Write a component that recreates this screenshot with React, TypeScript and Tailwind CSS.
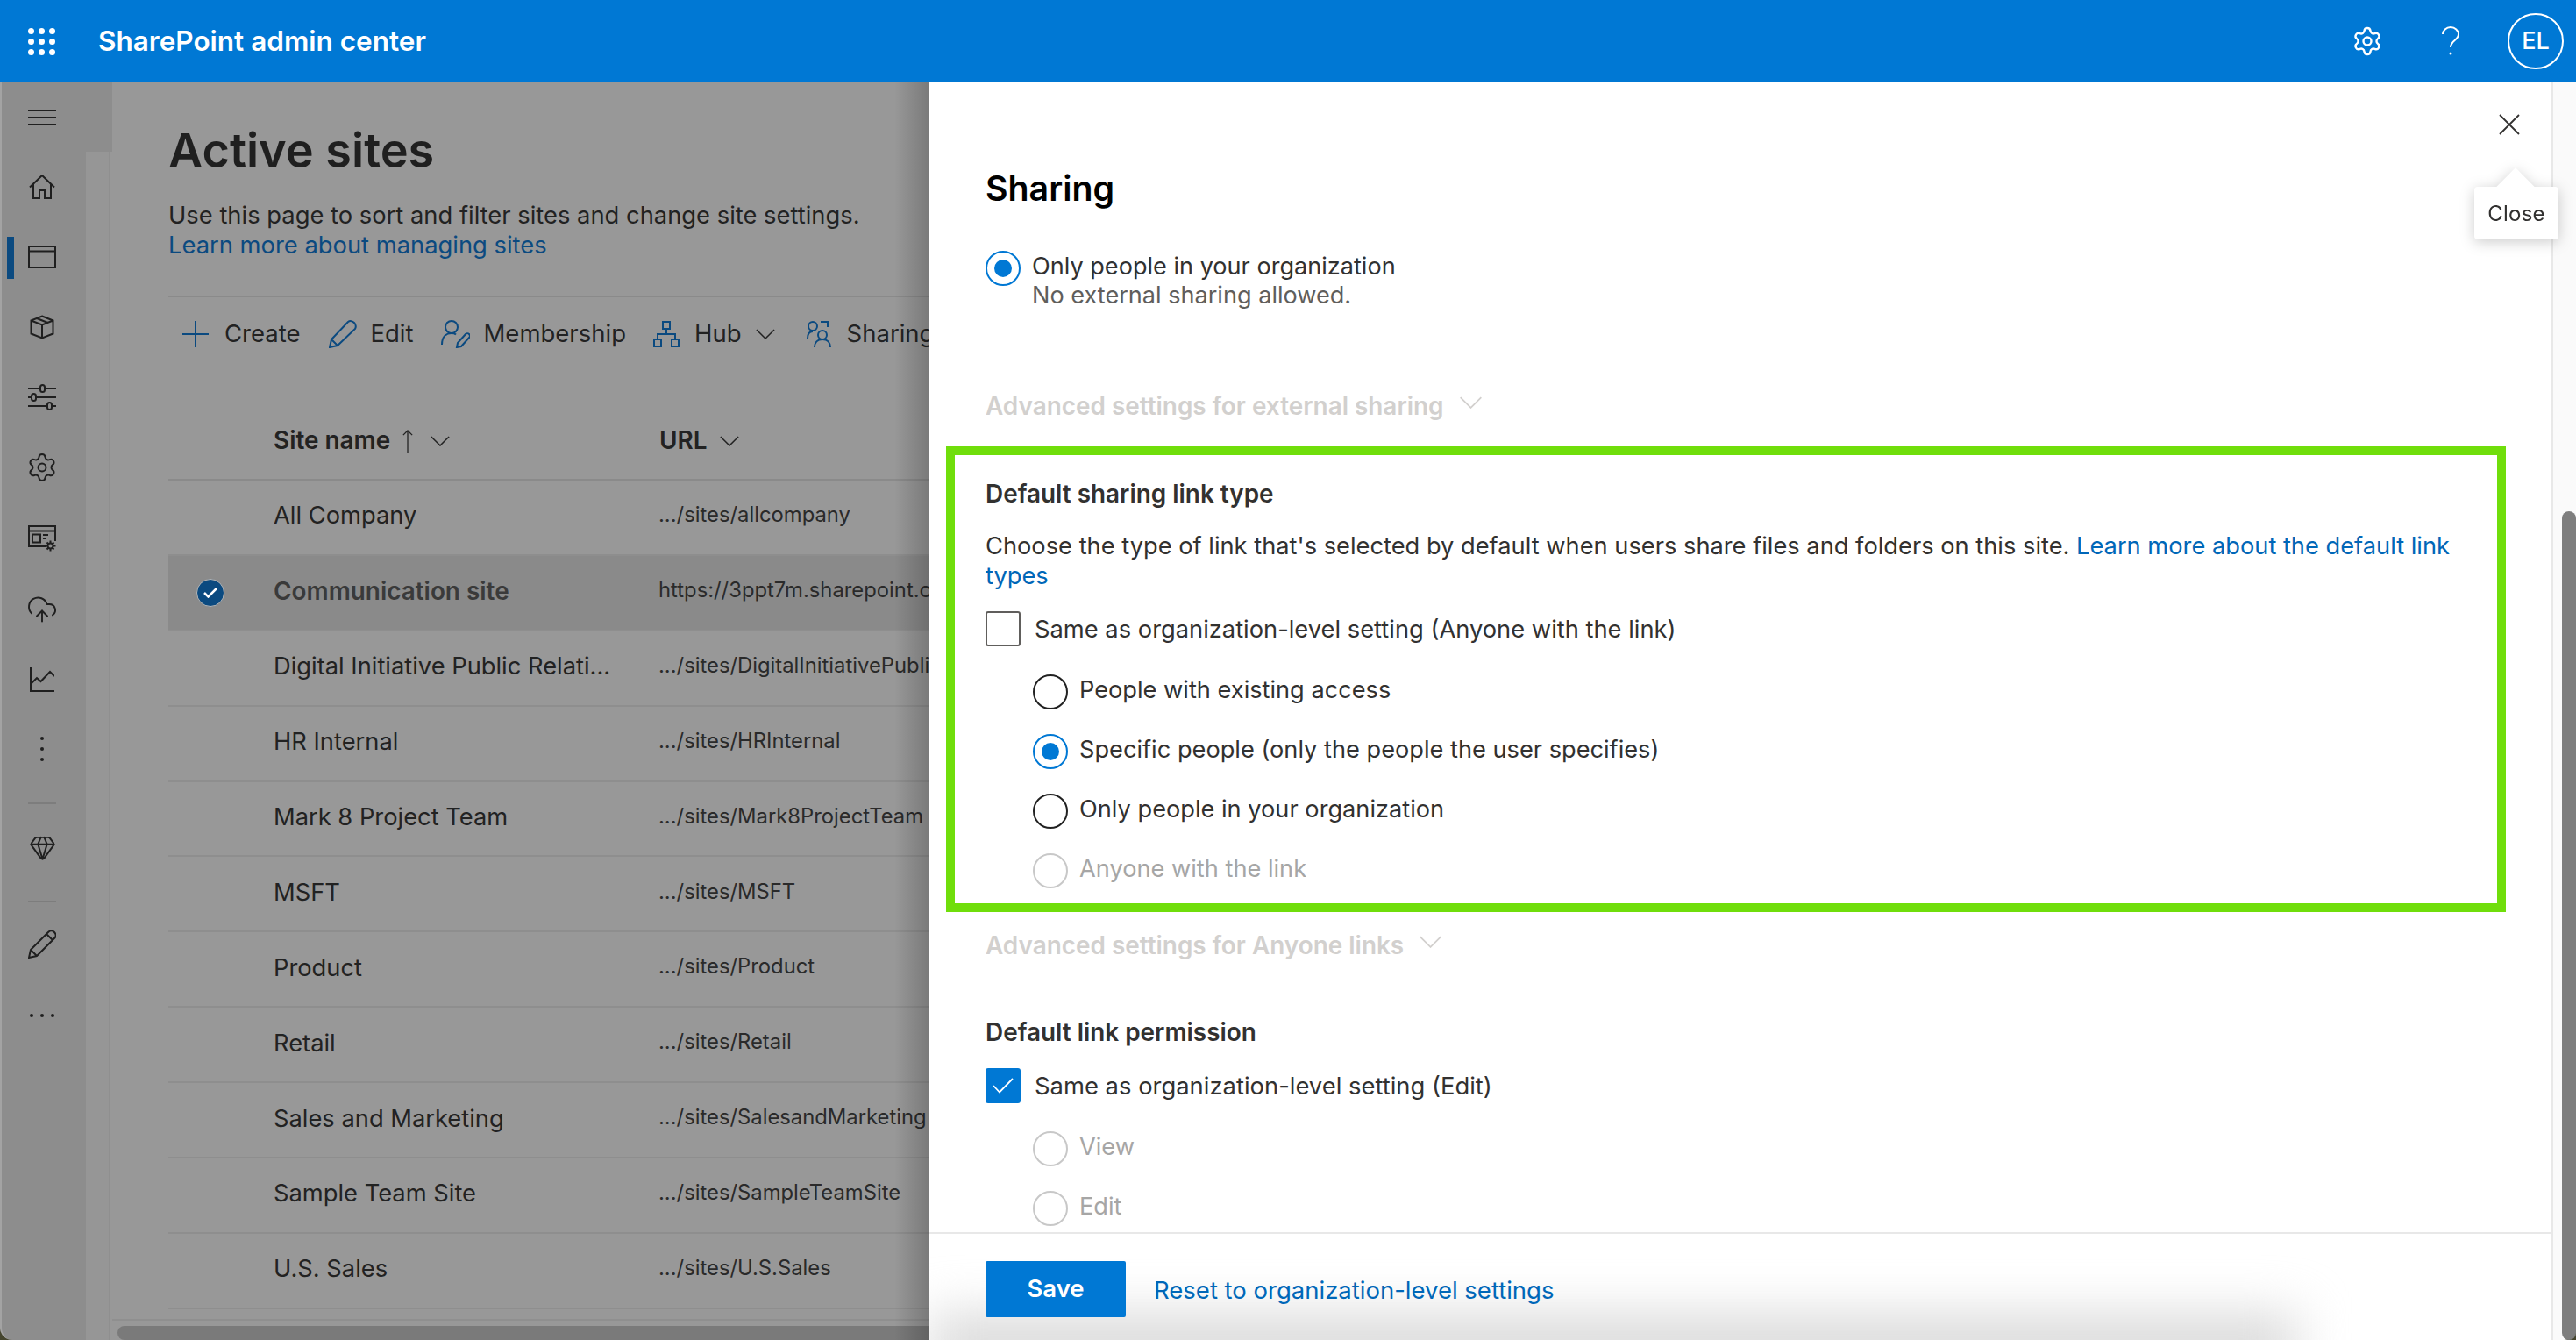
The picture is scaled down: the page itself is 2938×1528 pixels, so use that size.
import { Settings, CloudUpload, Gem } from "lucide-react";

const sites = [
  { name: "All Company", url: ".../sites/allcompany" },
  { name: "Communication site", url: "https://3ppt7m.sharepoint.com/sites/comm", selected: true },
  { name: "Digital Initiative Public Relati...", url: ".../sites/DigitalInitiativePublicRelations" },
  { name: "HR Internal", url: ".../sites/HRInternal" },
  { name: "Mark 8 Project Team", url: ".../sites/Mark8ProjectTeam" },
  { name: "MSFT", url: ".../sites/MSFT" },
  { name: "Product", url: ".../sites/Product" },
  { name: "Retail", url: ".../sites/Retail" },
  { name: "Sales and Marketing", url: ".../sites/SalesandMarketing" },
  { name: "Sample Team Site", url: ".../sites/SampleTeamSite" },
  { name: "U.S. Sales", url: ".../sites/U.S.Sales" },
];

function Chevron({ className }: { className: string }) {
  return (
    <svg viewBox="0 0 24 13" className={`shrink-0 ${className}`} fill="none" stroke="currentColor" strokeWidth="1.6">
      <path d="M1 1l11 11L23 1" />
    </svg>
  );
}

function Radio({ checked, disabled }: { checked?: boolean; disabled?: boolean }) {
  const border = checked ? "border-[#0078d4]" : disabled ? "border-[#c8c8c8]" : "border-[#222222]";
  return (
    <span className={`flex h-10 w-10 shrink-0 items-center justify-center rounded-full border-2 bg-white ${border}`}>
      {checked && <span className="h-5 w-5 rounded-full bg-[#0078d4]" />}
    </span>
  );
}

function RadioRow({ label, checked, disabled, className }: { label: string; checked?: boolean; disabled?: boolean; className: string }) {
  return (
    <div className={`ml-[54px] flex h-10 items-center gap-[13px] ${className}`}>
      <Radio checked={checked} disabled={disabled} />
      <span className={`-mt-[3px] text-[27.2px] ${disabled ? "text-[#a6a6a6]" : "text-[#323130]"}`}>{label}</span>
    </div>
  );
}

function NavSlot({ className, children }: { className: string; children: React.ReactNode }) {
  return <div className={`flex w-[92px] items-center justify-center ${className}`}>{children}</div>;
}

function SideNav() {
  return (
    <div className="flex w-[98px] shrink-0 flex-col rounded-bl-[14px] border-l-2 border-[#a3a3a3] bg-[#8d8d8d] text-[#1f1f1f]">
      <NavSlot className="h-[79px]">
        <div className="flex w-[32px] flex-col gap-[6px]">
          <span className="h-[2px] bg-[#1f1f1f]" />
          <span className="h-[2px] bg-[#1f1f1f]" />
          <span className="h-[2px] bg-[#1f1f1f]" />
        </div>
      </NavSlot>
      <NavSlot className="h-[80px]">
        <svg viewBox="0 0 30 28" className="h-[28px] w-[30px]" fill="none" stroke="currentColor" strokeWidth="2">
          <path d="M1 14.5L15 1l14 13.5M5 11v16h7v-9h6v9h7V11" />
        </svg>
      </NavSlot>
      <div className="relative">
        <span className="absolute left-[6px] top-[17px] h-[48px] w-2 bg-[#0b4a80]" />
        <NavSlot className="h-[80px]">
          <svg viewBox="0 0 32 26" className="h-[26px] w-[32px]" fill="none" stroke="currentColor" strokeWidth="2">
            <path d="M1 1h30v24H1zM1 6.5h30" />
          </svg>
        </NavSlot>
      </div>
      <NavSlot className="h-[80px]">
        <svg viewBox="0 0 28 28" className="h-[28px] w-[28px]" fill="none" stroke="currentColor" strokeWidth="2">
          <path d="M14 1.5l12.5 5v15L14 26.5l-12.5-5v-15zM1.5 6.5L14 11.5l12.5-5M14 11.5v15M8 4l12.5 5" />
        </svg>
      </NavSlot>
      <NavSlot className="h-[80px]">
        <svg viewBox="0 0 32 30" className="h-[30px] w-[32px]" fill="none" stroke="currentColor" strokeWidth="2">
          <path d="M0 5h13M20 5h12M0 15h3M10 15h22M0 25h21M28 25h4" />
          <rect x="14" y="1" width="5" height="8" rx="2.5" />
          <rect x="4" y="11" width="5" height="8" rx="2.5" />
          <rect x="22" y="21" width="5" height="8" rx="2.5" />
        </svg>
      </NavSlot>
      <NavSlot className="h-[80px]">
        <Settings className="h-[36px] w-[36px]" strokeWidth={1.3} />
      </NavSlot>
      <NavSlot className="h-[82px]">
        <svg viewBox="0 0 32 30" className="h-[30px] w-[32px]" fill="none" stroke="currentColor" strokeWidth="2">
          <path d="M20 24H1V1h30v17M1 6.5h30M5 10.500h9v9H5zM17 11h6M17 15h4" />
          <circle cx="25.500" cy="23.500" r="3" />
          <path d="M25.500 17.500v3M25.500 26.500v3M19.500 23.500h3M28.500 23.500h3M21.500 19.500l2 2M27.500 25.500l2 2M21.500 27.500l2-2M27.500 21.500l2-2" />
        </svg>
      </NavSlot>
      <NavSlot className="h-[80px]">
        <CloudUpload className="h-[36px] w-[36px]" strokeWidth={1.3} />
      </NavSlot>
      <NavSlot className="h-[79px]">
        <svg viewBox="0 0 28 28" className="h-[28px] w-[28px]" fill="none" stroke="currentColor" strokeWidth="2">
          <path d="M1 0v27h27M1 19l7-7 4.500 4L23 5l5 5" />
        </svg>
      </NavSlot>
      <NavSlot className="h-[80px]">
        <div className="flex flex-col gap-[8px]">
          <span className="h-1 w-1 rounded-full bg-[#1f1f1f]" />
          <span className="h-1 w-1 rounded-full bg-[#1f1f1f]" />
          <span className="h-1 w-1 rounded-full bg-[#1f1f1f]" />
        </div>
      </NavSlot>
      <div className="ml-[30px] mt-[21px] h-[2px] w-[32px] bg-[#7d7d7d]" />
      <NavSlot className="mt-[17px] h-[64px]">
        <Gem className="h-[31px] w-[31px]" strokeWidth={1.5} />
      </NavSlot>
      <div className="ml-[30px] mt-[29px] h-[2px] w-[32px] bg-[#7d7d7d]" />
      <NavSlot className="mt-[16px] h-[64px]">
        <svg viewBox="0 0 32 32" className="h-[32px] w-[32px]" fill="none" stroke="currentColor" strokeWidth="2">
          <path d="M1 31l2-9L23 2c2-2 5-2 7 0s2 5 0 7L10 29zM3 22l7 7M21 4l7 7" />
        </svg>
      </NavSlot>
      <NavSlot className="mt-[41px] h-[16px]">
        <div className="flex gap-[8px]">
          <span className="h-1 w-1 rounded-full bg-[#1f1f1f]" />
          <span className="h-1 w-1 rounded-full bg-[#1f1f1f]" />
          <span className="h-1 w-1 rounded-full bg-[#1f1f1f]" />
        </div>
      </NavSlot>
    </div>
  );
}

function Toolbar() {
  return (
    <div className="mt-[26px] flex h-[32px] items-center pl-4 text-[27.5px] text-[#222222]">
      <svg viewBox="0 0 30 30" className="h-[30px] w-[30px] shrink-0 text-[#0b4a80]" fill="none" stroke="currentColor" strokeWidth="2">
        <path d="M15 0v30M0 15h30" />
      </svg>
      <span className="ml-[18px]">Create</span>
      <svg viewBox="0 0 32 32" className="ml-[32px] h-[32px] w-[32px] shrink-0 text-[#0b4a80]" fill="none" stroke="currentColor" strokeWidth="2">
        <path d="M1 31l2-9L22 2c2-1.500 5-1 7 1s2 5 1 7L10 29zM3 22l7 7" />
      </svg>
      <span className="ml-[16px]">Edit</span>
      <svg viewBox="0 0 33 32" className="ml-[31px] h-[32px] w-[33px] shrink-0 text-[#0b4a80]" fill="none" stroke="currentColor" strokeWidth="2">
        <circle cx="12" cy="8" r="7" />
        <path d="M1 28c0-8 4-13 11-13 2 0 4 .5 5 1.500M18 31l1-5 9-10c1-1 3-1 4 0s1 3 0 4l-9 10z" />
      </svg>
      <span className="ml-[16px]">Membership</span>
      <svg viewBox="0 0 30 30" className="ml-[31px] h-[30px] w-[30px] shrink-0 text-[#0b4a80]" fill="none" stroke="currentColor" strokeWidth="2">
        <path d="M11 1h8v8h-8zM1 21h8v8H1zM21 21h8v8h-8zM15 9v6M5 21v-6h20v6" />
      </svg>
      <span className="ml-[17px]">Hub</span>
      <Chevron className="ml-[16px] h-[12px] w-[22px]" />
      <svg viewBox="0 0 28 30" className="ml-[36px] h-[30px] w-[28px] shrink-0 text-[#0b4a80]" fill="none" stroke="currentColor" strokeWidth="2">
        <circle cx="7" cy="6" r="5" />
        <circle cx="18" cy="16" r="5" />
        <path d="M1 20c0-5 2-8 6-8M9 30c0-5 3-9 9-9s9 4 9 9M16 1h8v6" />
      </svg>
      <span className="ml-[18px] whitespace-nowrap">Sharing</span>
    </div>
  );
}

function SitesPage() {
  return (
    <div className="relative flex min-w-0 flex-1 flex-col overflow-hidden bg-[#989898]">
      <div className="flex-1 pl-[64px]">
        <h1 className="mt-[46px] h-[64px] text-[54px] font-semibold leading-[64px] text-[#1f1f1f]">Active sites</h1>
        <p className="mt-[25px] whitespace-nowrap text-[27.35px] leading-[33.500px] text-[#222222]">
          Use this page to sort and filter sites and change site settings.
          <br />
          <a className="text-[#0b4a80]">Learn more about managing sites</a>
        </p>
        <div className="mt-[41px] h-[2px] bg-[#8a8a8a]" />
        <Toolbar />
        <div className="mt-[84px] flex h-[67px] items-center border-b-2 border-[#8a8a8a] pb-[22px] pl-[120px] text-[27.9px] font-semibold text-[#222222]">
          <span className="w-[147px] whitespace-nowrap">Site name</span>
          <svg viewBox="0 0 14 32" className="h-[30px] w-[12px] shrink-0" fill="none" stroke="currentColor" strokeWidth="1.500">
            <path d="M7 32V2M1 8l6-6 6 6" />
          </svg>
          <Chevron className="ml-[19px] h-[12px] w-[24px]" />
          <span className="ml-[238px]">URL</span>
          <Chevron className="ml-[13px] h-[12px] w-[24px]" />
        </div>
        {sites.map((s) => (
          <div
            key={s.name}
            className={`flex h-[85.9px] items-center border-b-2 border-[#8e8e8e] ${s.selected ? "bg-[#8a8a8a]" : ""}`}
          >
            <div className="w-[120px] shrink-0 pl-8">
              {s.selected && (
                <span className="flex h-8 w-8 items-center justify-center rounded-full border border-[#b5b5b5] bg-[#0b4a80]">
                  <svg viewBox="0 0 16 12" className="h-[12px] w-[16px]" fill="none" stroke="white" strokeWidth="2.500">
                    <path d="M1 6l4.500 4.500L15 1" />
                  </svg>
                </span>
              )}
            </div>
            <span className={`-mt-[2px] w-[439px] shrink-0 whitespace-nowrap ${s.selected ? "text-[27.9px] font-semibold text-[#3a3a3a]" : "text-[27.3px] text-[#222222]"}`}>
              {s.name}
            </span>
            <span className="-mt-[6px] whitespace-nowrap text-[23.8px] text-[#2a2a2a]">{s.url}</span>
          </div>
        ))}
      </div>
      <div className="flex h-[24px] shrink-0 items-end border-t-2 border-[#8f8f8f]">
        <div className="ml-[6px] h-[16px] w-full rounded-l-full bg-[#7a7a7a]" />
      </div>
      <div className="absolute bottom-0 right-0 top-0 w-[40px] bg-linear-to-r from-transparent to-black/20" />
    </div>
  );
}

function SharingPanel() {
  return (
    <div className="relative flex w-[1852px] shrink-0 flex-col border-r-2 border-[#e8e8e8] bg-white">
      <div className="min-h-0 flex-1 overflow-hidden pl-[64px]">
        <h2 className="mt-[97px] h-[48px] text-[39.3px] font-semibold leading-[48px] text-black">Sharing</h2>
        <div className="mt-[47px] flex gap-[13px]">
          <Radio checked />
          <div className="pt-[1px] text-[27.1px] leading-[33px]">
            <div className="text-[#323130]">Only people in your organization</div>
            <div className="text-[#605e5c]">No external sharing allowed.</div>
          </div>
        </div>
        <div className="mt-[93px] flex h-[36px] items-center text-[27.9px] font-semibold text-[#d2d0ce]">
          Advanced settings for external sharing
          <Chevron className="-mt-[10px] ml-[17px] h-[14px] w-[27px]" />
        </div>
        <div className="-ml-[45px] mt-[27px] h-[531px] w-[1779px] border-[10px] border-[#70de0b] pl-[35px] text-[#323130]">
          <div className="mt-[26px] h-[36px] text-[27.9px] font-semibold leading-[36px]">Default sharing link type</div>
          <p className="mt-[25px] w-[1710px] text-[27.25px] leading-[34px]">
            Choose the type of link that's selected by default when users share files and folders on this site.{" "}
            <a className="text-[#0067b8]">Learn more about the default link types</a>
          </p>
          <div className="mt-[23px] flex h-10 items-center gap-4">
            <span className="h-10 w-10 rounded-[3px] border-2 border-[#605e5c]" />
            <span className="mt-[2px] text-[27.3px]">Same as organization-level setting (Anyone with the link)</span>
          </div>
          <RadioRow className="mt-[32px]" label="People with existing access" />
          <RadioRow className="mt-[28px]" label="Specific people (only the people the user specifies)" checked />
          <RadioRow className="mt-[28px]" label="Only people in your organization" />
          <RadioRow className="mt-[28px]" label="Anyone with the link" disabled />
        </div>
        <div className="mt-[21px] flex h-[36px] items-center text-[27.9px] font-semibold text-[#d2d0ce]">
          Advanced settings for Anyone links
          <Chevron className="-mt-[10px] ml-[17px] h-[14px] w-[27px]" />
        </div>
        <div className="mt-[62px] h-[36px] text-[27.9px] font-semibold leading-[36px] text-[#323130]">Default link permission</div>
        <div className="mt-[23px] flex h-10 items-center gap-4">
          <span className="flex h-10 w-10 items-center justify-center rounded-[3px] bg-[#0078d4]">
            <svg viewBox="0 0 24 18" className="h-[18px] w-[24px]" fill="none" stroke="white" strokeWidth="1.800">
              <path d="M1 9l7 7.500L23 1" />
            </svg>
          </span>
          <span className="mt-[2px] text-[27.4px] text-[#323130]">Same as organization-level setting (Edit)</span>
        </div>
        <RadioRow className="mt-[32px]" label="View" disabled />
        <RadioRow className="mt-[28px]" label="Edit" disabled />
      </div>
      <div className="relative flex h-[123px] shrink-0 items-start gap-[32px] overflow-hidden border-t-2 border-[#e8e8e8] pl-[64px] pt-[31px]">
        <div className="absolute -bottom-[40px] left-0 h-[70px] w-[1560px] bg-[#dadada] blur-[28px]" />
        <button className="relative h-[64px] w-[160px] rounded-[2px] bg-[#0078d4] text-[27.5px] font-semibold text-white">Save</button>
        <a className="relative mt-[13px] text-[27.5px] text-[#0067b8]">Reset to organization-level settings</a>
      </div>
      <svg viewBox="0 0 24 24" className="absolute right-[36px] top-[36px] h-[24px] w-[24px] text-[#323130]" fill="none" stroke="currentColor" strokeWidth="1.800">
        <path d="M1 1l22 22M23 1L1 23" />
      </svg>
      <div className="absolute right-[-8px] top-[119px] flex h-[60px] w-[96px] items-center justify-center rounded-[4px] bg-white pt-[2px] text-[24px] tracking-[0.2px] text-[#323130] drop-shadow-[0_3px_8px_rgba(0,0,0,0.2)]">
        <span className="absolute -top-[15px] left-[31px] h-[32px] w-[32px] rotate-45 bg-white" />
        <span className="relative">Close</span>
      </div>
    </div>
  );
}

export default function App() {
  return (
    <div className="flex h-[1528px] w-[2938px] flex-col overflow-hidden bg-[#45452e] font-['Inter',sans-serif]">
      <header className="flex h-[94px] shrink-0 items-center bg-[#0078d4] pl-[32px] pr-[14px] text-white">
        <div className="grid w-[31px] grid-cols-3 gap-[5px]">
          {Array.from({ length: 9 }).map((_, i) => (
            <span key={i} className="h-[7px] w-[7px] rounded-full bg-white" />
          ))}
        </div>
        <span className="ml-[49px] text-[31.5px] font-semibold">SharePoint admin center</span>
        <Settings className="ml-auto h-[36px] w-[36px]" strokeWidth={1.6} />
        <svg viewBox="0 0 20 34" className="ml-[67px] h-[34px] w-[20px]" fill="none" stroke="currentColor" strokeWidth="2">
          <path d="M1 9c0-4 4-8 9-8s9 4 9 8c0 7-9 7-9 15" />
          <circle cx="10" cy="31" r="1.500" fill="white" stroke="none" />
        </svg>
        <span className="ml-[55px] flex h-[64px] w-[64px] items-center justify-center rounded-full border-2 border-white text-[27px] font-medium">EL</span>
      </header>
      <div className="flex min-h-0 flex-1">
        <div className="flex w-[1060px] shrink-0">
          <SideNav />
          <div className="flex w-[30px] shrink-0 flex-col bg-[#989898]">
            <div className="h-[79px] bg-[#8d8d8d]" />
            <div className="w-[28px] flex-1 border-r-2 border-[#8f8f8f] bg-[#969696]" />
          </div>
          <SitesPage />
        </div>
        <SharingPanel />
        <div className="flex-1 rounded-br-[14px] bg-[#fafafa] pl-[10px] pt-[489px]">
          <div className="h-full w-[16px] rounded-t-full rounded-b-full bg-[#7e7e7e]" />
        </div>
      </div>
    </div>
  );
}
